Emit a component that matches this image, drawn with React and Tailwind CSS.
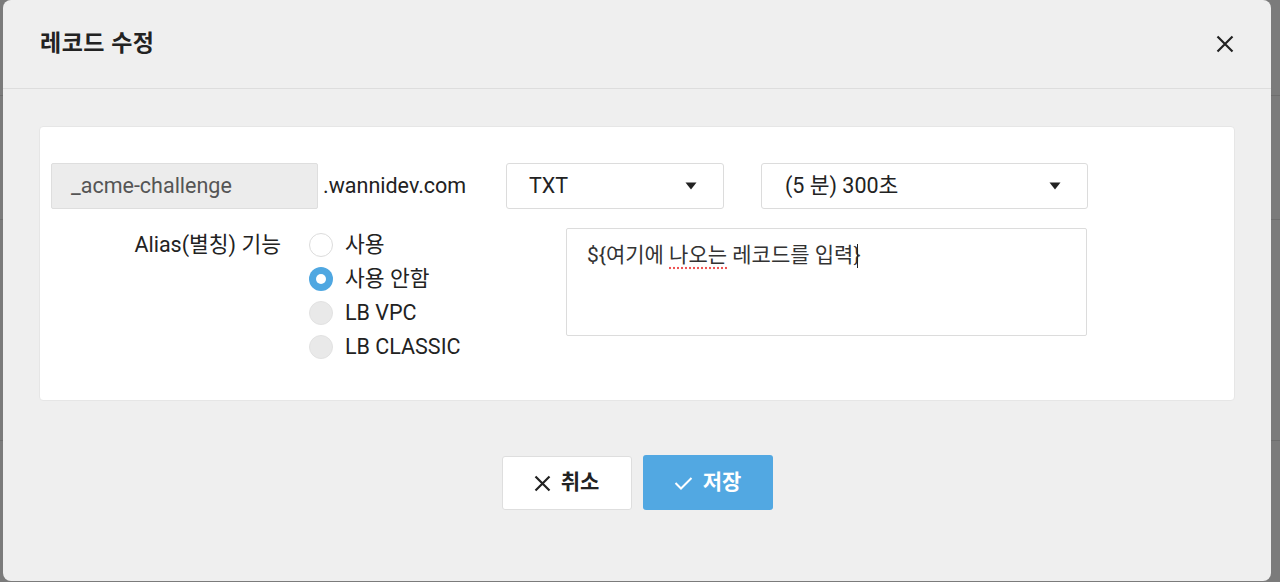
import React from "react";

const font = { fontFamily: 'Roboto, "Noto Sans CJK KR", sans-serif' };

function Caret() {
  return (
    <svg width="12" height="8" viewBox="0 0 12 8" className="shrink-0">
      <path d="M0.5 0.5 L11.5 0.5 L6 7.5 Z" fill="#222" />
    </svg>
  );
}

function Radio({ state, label }) {
  let circle;
  if (state === "on") {
    circle = (
      <span className="w-[24px] h-[24px] rounded-full bg-[#4fa7e1] flex items-center justify-center">
        <span className="w-[10px] h-[10px] rounded-full bg-white" />
      </span>
    );
  } else if (state === "off") {
    circle = <span className="w-[24px] h-[24px] rounded-full bg-white border border-[#dcdcdc]" />;
  } else {
    circle = <span className="w-[24px] h-[24px] rounded-full bg-[#e9e9e9] border border-[#e2e2e2]" />;
  }
  return (
    <div className="flex items-center h-[34px] gap-[12px]">
      {circle}
      <span className="text-[21.5px] text-[#222]">{label}</span>
    </div>
  );
}

export default function App() {
  return (
    <div className="w-[1280px] h-[582px] bg-[#7b7b7b] relative overflow-hidden" style={font}>
      <div className="absolute left-0 right-0 top-[95px] h-px bg-[#6e6e6e]" />
      <div className="absolute left-0 right-0 top-[219px] h-px bg-[#6e6e6e]" />
      <div className="absolute left-0 right-0 top-[440px] h-px bg-[#6e6e6e]" />
      <div className="absolute left-[3px] top-0 w-[1268px] h-[581px] bg-[#efefef] rounded-[8px] flex flex-col">
        <div className="h-[89px] border-b border-[#dddddd] flex items-center justify-between pl-[37px] pr-[36px] shrink-0">
          <h1 className="text-[23px] font-bold text-[#222] tracking-[0.5px]">레코드 수정</h1>
          <svg width="20" height="20" viewBox="0 0 20 20">
            <path d="M2.5 2.5 L17.5 17.5 M17.5 2.5 L2.5 17.5" stroke="#222" strokeWidth="2.2" strokeLinecap="butt" />
          </svg>
        </div>
        <div className="pt-[37px] px-[36px]">
          <div className="bg-white rounded-[4px] border border-[#e6e6e6] h-[275px] pt-[36px] pl-[11px]">
            <div className="flex items-center h-[46px]">
              <div className="w-[267px] h-[46px] bg-[#ececec] border border-[#dedede] rounded-[2px] flex items-center pl-[19px] text-[21.5px] text-[#555]">
                _acme-challenge
              </div>
              <span className="ml-[5px] text-[21.5px] text-[#222] w-[183px]">.wannidev.com</span>
              <div className="w-[218px] h-[46px] border border-[#dcdcdc] rounded-[3px] flex items-center justify-between pl-[22px] pr-[26px] text-[21.5px] text-[#222]">
                <span>TXT</span>
                <Caret />
              </div>
              <div className="ml-[37px] w-[327px] h-[46px] border border-[#dcdcdc] rounded-[3px] flex items-center justify-between pl-[23px] pr-[26px] text-[21.5px] text-[#222]">
                <span>(5 분) 300초</span>
                <Caret />
              </div>
            </div>
            <div className="flex mt-[19px]">
              <div className="w-[230px] flex justify-end h-[34px] items-center text-[21.5px] text-[#222]">
                Alias(별칭) 기능
              </div>
              <div className="ml-[28px] w-[257px] shrink-0 flex flex-col">
                <Radio state="off" label="사용" />
                <Radio state="on" label="사용 안함" />
                <Radio state="dis" label="LB VPC" />
                <Radio state="dis" label="LB CLASSIC" />
              </div>
              <div className="w-[521px] h-[108px] border border-[#dcdcdc] rounded-[2px] pl-[20px] pt-[11px] text-[21px] text-[#333] leading-[30px]">
                <span>{"${여기에 "}</span>
                <span className="underline decoration-dotted decoration-[#e55] underline-offset-[5px]">나오는</span>
                <span>{" 레코드를 입력}"}</span>
                <span className="inline-block w-px h-[24px] bg-[#222] align-middle -ml-[4px]" />
              </div>
            </div>
          </div>
        </div>
        <div className="flex justify-center gap-[11px] mt-[55px]">
          <button className="w-[130px] h-[54px] bg-white border border-[#dedede] rounded-[3px] flex items-center justify-center gap-[10px] text-[21px] font-bold text-[#222]">
            <svg width="17" height="17" viewBox="0 0 17 17">
              <path d="M1.5 1.5 L15.5 15.5 M15.5 1.5 L1.5 15.5" stroke="#222" strokeWidth="2.2" />
            </svg>
            <span>취소</span>
          </button>
          <button className="w-[130px] h-[55px] -mt-px bg-[#52a8e2] rounded-[3px] flex items-center justify-center gap-[10px] text-[21px] font-bold text-white">
            <svg width="19" height="14" viewBox="0 0 19 14">
              <path d="M1.5 7 L7 12.5 L17.5 2" stroke="white" strokeWidth="2" fill="none" />
            </svg>
            <span>저장</span>
          </button>
        </div>
      </div>
    </div>
  );
}
